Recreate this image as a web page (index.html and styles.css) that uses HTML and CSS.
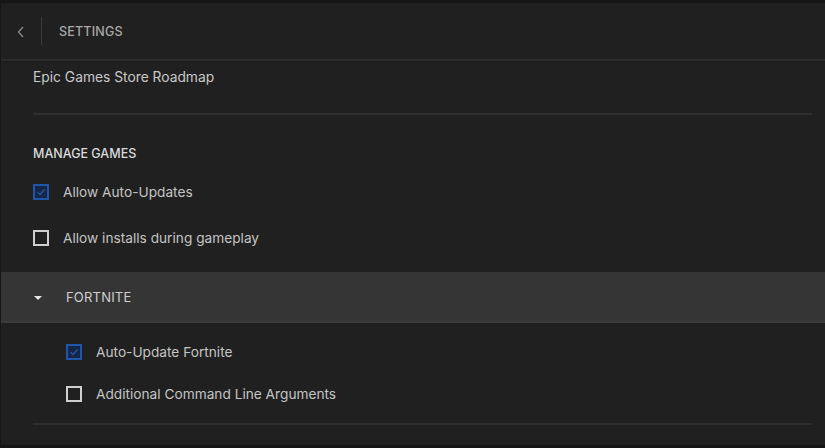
FILE: index.html
```html
<!doctype html>
<html lang="en">
<head>
    <meta charset="UTF-8">
    <title>Settings</title>
    <link rel="stylesheet" href="styles.css">
</head>
<body>
    <div class="page">
        <div class="header">
            <div class="back">
                <svg width="10" height="14" viewBox="0 0 10 14"><path d="M7 2 L2.5 7 L7 12" fill="none" stroke="#8a8a8a" stroke-width="1.4"/></svg>
            </div>
            <div class="header-divider"></div>
            <div class="header-title">SETTINGS</div>
        </div>

        <div class="content">
            <div class="link-row">Epic Games Store Roadmap</div>
            <div class="divider"></div>

            <div class="section-title">MANAGE GAMES</div>
            <div class="check-row first">
                <span class="box is-checked">
                    <svg width="10" height="10" viewBox="0 0 10 10"><path d="M1.5 5.2 L4 7.5 L8.5 2.5" fill="none" stroke="#2a5599" stroke-width="1.3"/></svg>
                </span>
                <span class="label">Allow Auto-Updates</span>
            </div>
            <div class="check-row">
                <span class="box"></span>
                <span class="label">Allow installs during gameplay</span>
            </div>
        </div>

        <div class="game-row">
            <span class="caret"></span>
            <span class="game-name">FORTNITE</span>
        </div>

        <div class="content sub">
            <div class="check-row">
                <span class="box is-checked">
                    <svg width="10" height="10" viewBox="0 0 10 10"><path d="M1.5 5.2 L4 7.5 L8.5 2.5" fill="none" stroke="#2a5599" stroke-width="1.3"/></svg>
                </span>
                <span class="label">Auto-Update Fortnite</span>
            </div>
            <div class="check-row tight">
                <span class="box"></span>
                <span class="label">Additional Command Line Arguments</span>
            </div>
        </div>
        <div class="content">
            <div class="divider bottom"></div>
        </div>
    </div>
</body>
</html>
```

FILE: styles.css
```css
html,body{
    margin: 0;
    height: 100%;
    background-color: #161616;
    font-family: Inter, "Noto Sans", sans-serif;
    overflow: hidden;
}
.page{
    height: 442px;
    margin-top: 3px;
    margin-left: 1px;
    background-color: #202020;
}
.header{
    display: flex;
    align-items: center;
    height: 56px;
    border-bottom: 2px solid #2c2c2c;
    box-shadow: 0 1px 0 #1a1a1a;
}
.back{
    width: 40px;
    display: flex;
    justify-content: center;
    padding-top: 1px;
}
.header-divider{
    width: 1px;
    height: 28px;
    background-color: #3a3a3a;
}
.header-title{
    margin-left: 17px;
    font-size: 12.5px;
    font-weight: 500;
    letter-spacing: 0.2px;
    color: #a8a8a8;
}
.content{
    padding: 0 13px 0 32px;
}
.content.sub{
    padding-left: 65px;
}
.link-row{
    height: 28px;
    padding-top: 2px;
    line-height: 28px;
    font-size: 13.8px;
    color: #c8c8c8;
}
.divider{
    margin-top: 22px;
    height: 2px;
    background-color: #2e2e2e;
}
.divider.bottom{
    margin-top: 19px;
}
.section-title{
    margin-top: 29px;
    height: 20px;
    line-height: 20px;
    font-size: 12.5px;
    font-weight: 500;
    color: #dadada;
}
.check-row{
    display: flex;
    align-items: center;
    height: 20px;
    margin-top: 26px;
}
.check-row.first{
    margin-top: 18px;
}
.check-row.tight{
    margin-top: 22px;
}
.box{
    box-sizing: border-box;
    width: 16px;
    height: 16px;
    border: 2px solid #cfcfcf;
    display: flex;
    align-items: center;
    justify-content: center;
}
.box.is-checked{
    border-color: #1f56a8;
    background-color: #14264a;
}
.label{
    margin-left: 14px;
    font-size: 13.7px;
    color: #c4c4c4;
}
.game-row{
    display: flex;
    align-items: center;
    height: 49px;
    margin-top: 24px;
    background-color: #353535;
    border-bottom: 2px solid #3c3c3c;
}
.caret{
    margin-left: 33px;
    width: 0;
    height: 0;
    border-left: 4px solid transparent;
    border-right: 4px solid transparent;
    border-top: 4px solid #e6e6e6;
    margin-top: 2px;
}
.game-name{
    margin-left: 24px;
    font-size: 13px;
    color: #cfcfcf;
    letter-spacing: 0.2px;
}
.content.sub .check-row:first-child{
    margin-top: 19px;
}
```
